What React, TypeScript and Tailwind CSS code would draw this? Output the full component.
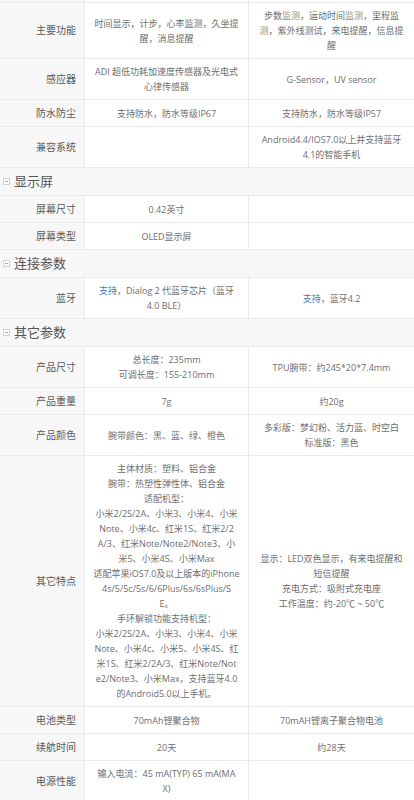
import React from "react";

type Part = string | { link: string } | { tint: string };
type Line = Part[] | string;

interface SpecRow {
  label: string;
  a: Line[];
  b: Line[];
}

interface Section {
  title?: string;
  rows: SpecRow[];
}

const sections: Section[] = [
  {
    rows: [
      {
        label: "主要功能",
        a: ["时间显示，计步，心率监测，久坐提", "醒，消息提醒"],
        b: [
          ["步数", { tint: "监测" }, "，运动时间", { tint: "监测" }, "，里程监"],
          [{ tint: "测" }, "，紫外线测试，来电提醒，信息提"],
          "醒",
        ],
      },
      {
        label: "感应器",
        a: ["ADI 超低功耗加速度传感器及光电式", "心律传感器"],
        b: ["G-Sensor，UV sensor"],
      },
      {
        label: "防水防尘",
        a: ["支持防水，防水等级IP67"],
        b: ["支持防水，防水等级IP57"],
      },
      {
        label: "兼容系统",
        a: [],
        b: ["Android4.4/IOS7.0以上并支持蓝牙", "4.1的智能手机"],
      },
    ],
  },
  {
    title: "显示屏",
    rows: [
      { label: "屏幕尺寸", a: ["0.42英寸"], b: [] },
      { label: "屏幕类型", a: ["OLED显示屏"], b: [] },
    ],
  },
  {
    title: "连接参数",
    rows: [
      {
        label: "蓝牙",
        a: [[{ link: "支持" }, "，Dialog 2 代蓝牙芯片（蓝牙"], "4.0 BLE）"],
        b: [[{ link: "支持" }, "，蓝牙4.2"]],
      },
    ],
  },
  {
    title: "其它参数",
    rows: [
      {
        label: "产品尺寸",
        a: ["总长度：235mm", "可调长度：155-210mm"],
        b: ["TPU腕带：约245*20*7.4mm"],
      },
      { label: "产品重量", a: ["7g"], b: ["约20g"] },
      {
        label: "产品颜色",
        a: ["腕带颜色：黑、蓝、绿、橙色"],
        b: ["多彩版：梦幻粉、活力蓝、时空白", "标准版：黑色"],
      },
      {
        label: "其它特点",
        a: [
          "主体材质：塑料、铝合金",
          "腕带：热塑性弹性体、铝合金",
          "适配机型：",
          "小米2/2S/2A、小米3、小米4、小米",
          "Note、小米4c、红米1S、红米2/2",
          "A/3、红米Note/Note2/Note3、小",
          "米5、小米4S、小米Max",
          "适配苹果iOS7.0及以上版本的iPhone",
          "4s/5/5c/5s/6/6Plus/6s/6sPlus/S",
          "E。",
          "手环解锁功能支持机型：",
          "小米2/2S/2A、小米3、小米4、小米",
          "Note、小米4c、小米5、小米4S、红",
          "米1S、红米2/2A/3、红米Note/Not",
          "e2/Note3、小米Max，支持蓝牙4.0",
          "的Android5.0以上手机。",
        ],
        b: [
          "显示：LED双色显示，有来电提醒和",
          "短信提醒",
          "充电方式：吸附式充电座",
          "工作温度：约-20℃ ~ 50℃",
        ],
      },
      { label: "电池类型", a: ["70mAh锂聚合物"], b: ["70mAH锂离子聚合物电池"] },
      { label: "续航时间", a: ["20天"], b: ["约28天"] },
      {
        label: "电源性能",
        a: ["输入电流：45 mA(TYP) 65 mA(MA", "X)"],
        b: [],
      },
    ],
  },
];

const font = "font-['Open_Sans','Noto_Sans_CJK_SC',sans-serif]";

const renderLine = (line: Line, idx: number) => {
  if (typeof line === "string") {
    return (
      <div key={idx} className="whitespace-nowrap">
        {line}
      </div>
    );
  }
  return (
    <div key={idx} className="whitespace-nowrap">
      {line.map((p, i) => {
        if (typeof p === "string") return <span key={i}>{p}</span>;
        if ("link" in p)
          return (
            <span key={i} className="text-[#4577b4]">
              {p.link}
            </span>
          );
        return (
          <span key={i} className="text-[#97977a]">
            {p.tint}
          </span>
        );
      })}
    </div>
  );
};

const Cell = ({ lines, last }: { lines: Line[]; last?: boolean }) => (
  <div
    className={`flex flex-col items-center justify-center bg-white px-1 py-[5px] text-center text-[9px] leading-[15px] text-[#6e6e6e] ${
      last ? "" : "border-r border-[#ebebeb]"
    }`}
  >
    {lines.map(renderLine)}
  </div>
);

const Row = ({ row }: { row: SpecRow }) => (
  <div className="grid min-h-[27px] grid-cols-[85px_164px_1fr] border-b border-[#ebebeb]">
    <div className="flex items-center justify-end border-r border-[#ebebeb] bg-[#f7f7f7] pr-2 text-[10px] text-[#5a5a5a]">
      {row.label}
    </div>
    <Cell lines={row.a} />
    <Cell lines={row.b} last />
  </div>
);

const SectionTitle = ({ title }: { title: string }) => (
  <div className="flex h-[28px] items-center gap-[4px] border-b border-[#ebebeb] bg-[#f7f7f7] pl-[3px]">
    <span className="flex h-[7px] w-[7px] items-center justify-center border border-[#d2d2d2] bg-white">
      <span className="h-px w-[3px] bg-[#aaa]" />
    </span>
    <span className="text-[13px] leading-none text-[#555]">{title}</span>
  </div>
);

export default function App() {
  return (
    <div className={`w-[414px] overflow-hidden bg-white ${font}`}>
      <div className="grid h-[3px] grid-cols-[85px_164px_1fr] border-b border-[#ebebeb]">
        <div className="border-r border-[#ebebeb] bg-[#f7f7f7]" />
        <div className="border-r border-[#ebebeb]" />
        <div />
      </div>
      {sections.map((s, si) => (
        <div key={si}>
          {s.title && <SectionTitle title={s.title} />}
          {s.rows.map((r) => (
            <Row key={r.label} row={r} />
          ))}
        </div>
      ))}
    </div>
  );
}
